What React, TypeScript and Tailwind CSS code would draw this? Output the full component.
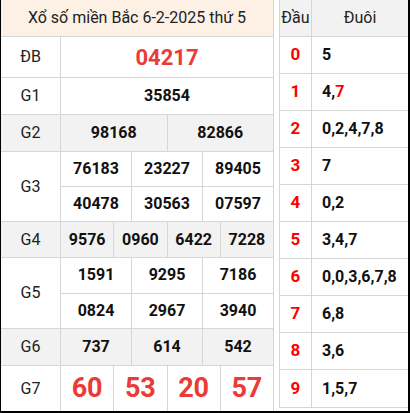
import React from "react";

const font = { fontFamily: "Roboto, 'Noto Sans', sans-serif" };

type Row = { label: string; h: string; gray?: boolean; lines: string[][]; big?: boolean; red?: boolean; last?: boolean };

const rows: Row[] = [
    { label: "ĐB", h: "h-[41px]", lines: [["04217"]], red: true },
    { label: "G1", h: "h-[37px]", lines: [["35854"]] },
    { label: "G2", h: "h-[37px]", gray: true, lines: [["98168", "82866"]] },
    { label: "G3", h: "h-[70px]", lines: [["76183", "23227", "89405"], ["40478", "30563", "07597"]] },
    { label: "G4", h: "h-[36px]", gray: true, lines: [["9576", "0960", "6422", "7228"]] },
    { label: "G5", h: "h-[71px]", lines: [["1591", "9295", "7186"], ["0824", "2967", "3940"]] },
    { label: "G6", h: "h-[37px]", gray: true, lines: [["737", "614", "542"]] },
    { label: "G7", h: "flex-1", lines: [["60", "53", "20", "57"]], big: true, last: true },
];

const loto: { d: string; tail: React.ReactNode }[] = [
    { d: "0", tail: "5" },
    { d: "1", tail: <>4,<span className="text-[#ff0000]">7</span></> },
    { d: "2", tail: "0,2,4,7,8" },
    { d: "3", tail: "7" },
    { d: "4", tail: "0,2" },
    { d: "5", tail: "3,4,7" },
    { d: "6", tail: "0,0,3,6,7,8" },
    { d: "7", tail: "6,8" },
    { d: "8", tail: "3,6" },
    { d: "9", tail: "1,5,7" },
];

export default function App() {
    return (
        <div style={font} className="w-[410px] h-[413px] bg-white border-l border-r-2 border-b-2 border-black flex">
            {/* bảng kết quả */}
            <div className="w-[273px] h-full flex flex-col border-r border-[#d6d6d6]">
                <div className="h-[37px] bg-[#fdf1e6] border-b border-[#d6d6d6] flex items-center justify-center text-[16px] text-[#222]">
                    Xổ số miền Bắc 6-2-2025 thứ 5
                </div>
                {rows.map((r) => (
                    <div key={r.label} className={`${r.h} flex ${r.last ? "" : "border-b border-[#d6d6d6]"} ${r.gray ? "bg-[#f2f2f2]" : ""}`}>
                        <div className="w-[60px] shrink-0 border-r border-[#d6d6d6] flex items-center justify-center text-[16px] text-[#222]">
                            {r.label}
                        </div>
                        <div className="flex-1 flex flex-col">
                            {r.lines.map((line, i) => (
                                <div key={i} className={`flex-1 flex ${i < r.lines.length - 1 ? "border-b border-[#d6d6d6]" : ""}`}>
                                    {line.map((n, j) => (
                                        <div
                                            key={j}
                                            className={`flex-1 flex items-center justify-center font-bold ${j < line.length - 1 ? "border-r border-[#d6d6d6]" : ""} ${
                                                r.big ? "text-[27px] text-[#ea3b36]" : r.red ? "text-[22px] text-[#ea3b36]" : "text-[16px] text-[#111]"
                                            }`}
                                        >
                                            {n}
                                        </div>
                                    ))}
                                </div>
                            ))}
                        </div>
                    </div>
                ))}
            </div>

            {/* bảng lô tô */}
            <div className="ml-[5px] flex-1 self-start border-l border-b border-[#d6d6d6] flex flex-col">
                <div className="h-[37px] bg-[#f2f2f2] flex border-b border-[#d6d6d6] text-[16px] text-[#222]">
                    <div className="w-[32px] border-r border-[#d6d6d6] flex items-center justify-center">Đầu</div>
                    <div className="flex-1 flex items-center justify-center">Đuôi</div>
                </div>
                {loto.map((l, i) => (
                    <div key={l.d} className={`h-[37px] flex ${i < loto.length - 1 ? "border-b border-[#d6d6d6]" : ""}`}>
                        <div className="w-[32px] border-r border-[#d6d6d6] flex items-center justify-center text-[17px] font-bold text-[#ff0000]">
                            {l.d}
                        </div>
                        <div className="flex-1 flex items-center pl-[10px] text-[16px] font-bold text-[#111]">{l.tail}</div>
                    </div>
                ))}
            </div>
        </div>
    );
}
